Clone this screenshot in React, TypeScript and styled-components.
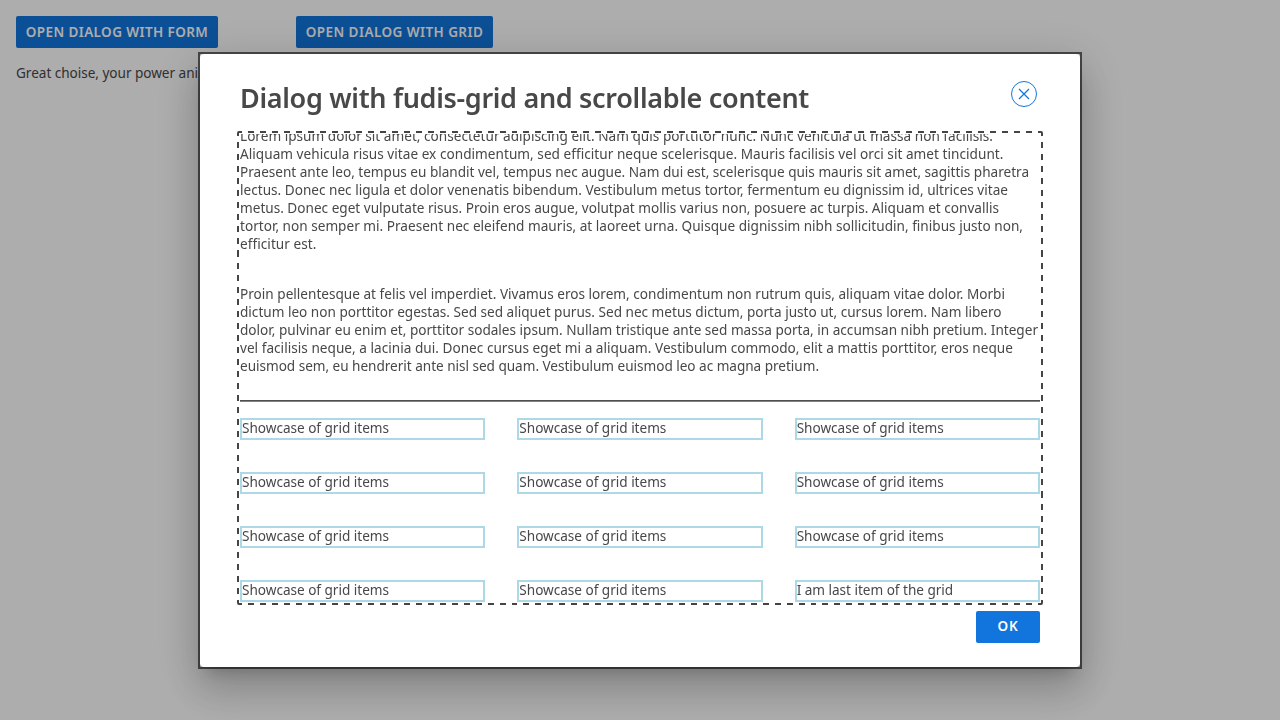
import React, { useLayoutEffect, useRef, useState } from 'react';
import styled, { createGlobalStyle } from 'styled-components';

const GlobalStyle = createGlobalStyle`
  *, *::before, *::after { box-sizing: border-box; }
  body {
    margin: 0;
    overflow: hidden;
    background: #fff;
    color: #484848;
    font: 400 13.6px/18px 'Noto Sans', 'Open Sans', sans-serif;
    font-stretch: 80%;
  }
`;

const Page = styled.main`
  min-height: 720px;
  padding: 16px;
`;

const Launchers = styled.div`
  display: grid;
  grid-template-columns: 248px 248px;
  column-gap: 32px;
  justify-items: start;
`;

const Button = styled.button<{ $width: number; $lift?: number }>`
  display: flex;
  align-items: center;
  justify-content: center;
  width: ${(p) => p.$width}px;
  height: 32px;
  padding: 0 0 ${(p) => p.$lift ?? 0}px;
  border: 0;
  border-radius: 2px;
  background: #1175dd;
  color: #fff;
  font: 600 13.5px/18px 'Noto Sans', 'Open Sans', sans-serif;
  font-stretch: 80%;
`;

const Result = styled.p`
  margin: 16px 0 0;
`;

const Backdrop = styled.div`
  position: fixed;
  inset: 0;
  display: flex;
  align-items: flex-start;
  justify-content: center;
  padding-top: 52px;
  background: rgba(0, 0, 0, 0.32);
`;

const Container = styled.div`
  width: 884px;
  height: 617px;
  border: 2px solid #484848;
`;

const Surface = styled.section`
  display: flex;
  flex-direction: column;
  height: 100%;
  padding: 27px 40px 24px;
  border-radius: 4px;
  background: #fff;
  box-shadow:
    0 11px 15px -7px rgba(0, 0, 0, 0.2),
    0 24px 38px 3px rgba(0, 0, 0, 0.14),
    0 9px 46px 8px rgba(0, 0, 0, 0.12);
`;

const Header = styled.header`
  display: flex;
  flex: none;
  align-items: flex-start;
  justify-content: space-between;
  height: 50px;
  padding-right: 3px;
`;

const Title = styled.h2`
  margin: 0;
  font-size: 27px;
  font-weight: 600;
  line-height: 33px;
`;

const CloseButton = styled.button`
  display: flex;
  padding: 0;
  border: 0;
  background: none;
  color: #1175dd;
`;

/* Dashed frame with six pixel dashes and gaps, which a dashed border does not give. */
const across = 'repeating-linear-gradient(90deg, #454545 0 5.4px, transparent 5.4px 11.4px, #454545 11.4px 11.96px)';
const down = 'repeating-linear-gradient(180deg, #454545 0 5px, transparent 5px 11px, #454545 11px 12.05px)';

const FocusFrame = styled.div`
  flex: none;
  margin: 0 -3px;
  padding: 3px;
  border-radius: 2px;
  background:
    ${across} top / 100% 2px no-repeat,
    ${across} bottom / 100% 2px no-repeat,
    ${down} left / 2px 100% no-repeat,
    ${down} right / 2px 100% no-repeat;
`;

const ScrollArea = styled.div`
  display: flex;
  flex-direction: column;
  justify-content: flex-end;
  height: 468px;
  overflow: hidden;
  outline: none;
`;

const Paragraph = styled.p`
  flex: none;
  margin: 0 0 32px;
`;

const Line = styled.span`
  display: block;
  height: 18px;
  white-space: nowrap;
`;

const Divider = styled.hr`
  flex: none;
  width: 100%;
  height: 2px;
  margin: -7px 0 16px;
  border: 0;
  border-top: 1px solid #505050;
  border-bottom: 1px solid #808080;
`;

const Grid = styled.div`
  display: grid;
  flex: none;
  grid-template-columns: repeat(3, 1fr);
  gap: 32px;
`;

const GridItem = styled.div`
  height: 22px;
  border: 2px solid lightblue;
  line-height: 16px;
`;

const Footer = styled.footer`
  display: flex;
  justify-content: flex-end;
  padding-top: 6px;
`;

const Tracked = styled.span`
  display: inline-block;
  white-space: nowrap;
`;

/* Text whose tracking is adjusted so that it takes up the given width. */
function FitText({ text, width }: { text: string; width: number }) {
  const ref = useRef<HTMLSpanElement>(null);
  const [spacing, setSpacing] = useState(0);
  useLayoutEffect(() => {
    const natural = ref.current!.getBoundingClientRect().width;
    setSpacing((width - natural) / text.length);
  }, [text, width]);
  return (
    <Tracked ref={ref} style={{ letterSpacing: spacing }}>
      {text}
    </Tracked>
  );
}

const paragraphs: [string, number][][] = [
  [
    ['Lorem ipsum dolor sit amet, consectetur adipiscing elit. Nam quis porttitor nunc. Nunc vehicula ut massa non facilisis.', 753],
    ['Aliquam vehicula risus vitae ex condimentum, sed efficitur neque scelerisque. Mauris facilisis vel orci sit amet tincidunt.', 763.5],
    ['Praesent ante leo, tempus eu blandit vel, tempus nec augue. Nam dui est, scelerisque quis mauris sit amet, sagittis pharetra', 789],
    ['lectus. Donec nec ligula et dolor venenatis bibendum. Vestibulum metus tortor, fermentum eu dignissim id, ultrices vitae', 768],
    ['metus. Donec eget vulputate risus. Proin eros augue, volutpat mollis varius non, posuere ac turpis. Aliquam et convallis', 759],
    ['tortor, non semper mi. Praesent nec eleifend mauris, at laoreet urna. Quisque dignissim nibh sollicitudin, finibus justo non,', 783],
    ['efficitur est.', 76.5],
  ],
  [
    ['Proin pellentesque at felis vel imperdiet. Vivamus eros lorem, condimentum non rutrum quis, aliquam vitae dolor. Morbi', 765],
    ['dictum leo non porttitor egestas. Sed sed aliquet purus. Sed nec metus dictum, porta justo ut, cursus lorem. Nam libero', 761.5],
    ['dolor, pulvinar eu enim et, porttitor sodales ipsum. Nullam tristique ante sed massa porta, in accumsan nibh pretium. Integer', 798],
    ['vel facilisis neque, a lacinia dui. Donec cursus eget mi a aliquam. Vestibulum commodo, elit a mattis porttitor, eros neque', 773],
    ['euismod sem, eu hendrerit ante nisl sed quam. Vestibulum euismod leo ac magna pretium.', 579],
  ],
];

const items: [string, number][] = [
  ...Array.from({ length: 11 }, (): [string, number] => ['Showcase of grid items', 147]),
  ['I am last item of the grid', 156.5],
];

export default function App() {
  return (
    <>
      <GlobalStyle />
      <Page>
        <Launchers>
          <Button $width={202}>
            <FitText text="OPEN DIALOG WITH FORM" width={182.5} />
          </Button>
          <Button $width={197}>
            <FitText text="OPEN DIALOG WITH GRID" width={177.5} />
          </Button>
        </Launchers>
        <Result>
          <FitText text="Great choise, your power ani" width={182} />
        </Result>
      </Page>
      <Backdrop>
        <Container>
          <Surface role="dialog" aria-modal="true">
            <Header>
              <Title>
                <FitText text="Dialog with fudis-grid and scrollable content" width={569} />
              </Title>
              <CloseButton aria-label="Close">
                <svg width="26" height="26" viewBox="0 0 26 26" fill="none" stroke="currentColor">
                  <circle cx="13" cy="13" r="12.5" />
                  <path d="M8 8l10 10M18 8L8 18" strokeWidth="1.3" />
                </svg>
              </CloseButton>
            </Header>
            <FocusFrame>
              <ScrollArea tabIndex={0}>
                {paragraphs.map((lines, i) => (
                  <Paragraph key={i}>
                    {lines.map(([text, width]) => (
                      <Line key={text}>
                        <FitText text={text} width={width} />
                      </Line>
                    ))}
                  </Paragraph>
                ))}
                <Divider />
                <Grid>
                  {items.map(([text, width], i) => (
                    <GridItem key={i}>
                      <FitText text={text} width={width} />
                    </GridItem>
                  ))}
                </Grid>
              </ScrollArea>
            </FocusFrame>
            <Footer>
              <Button $width={64} $lift={2}>
                <FitText text="OK" width={21} />
              </Button>
            </Footer>
          </Surface>
        </Container>
      </Backdrop>
    </>
  );
}
